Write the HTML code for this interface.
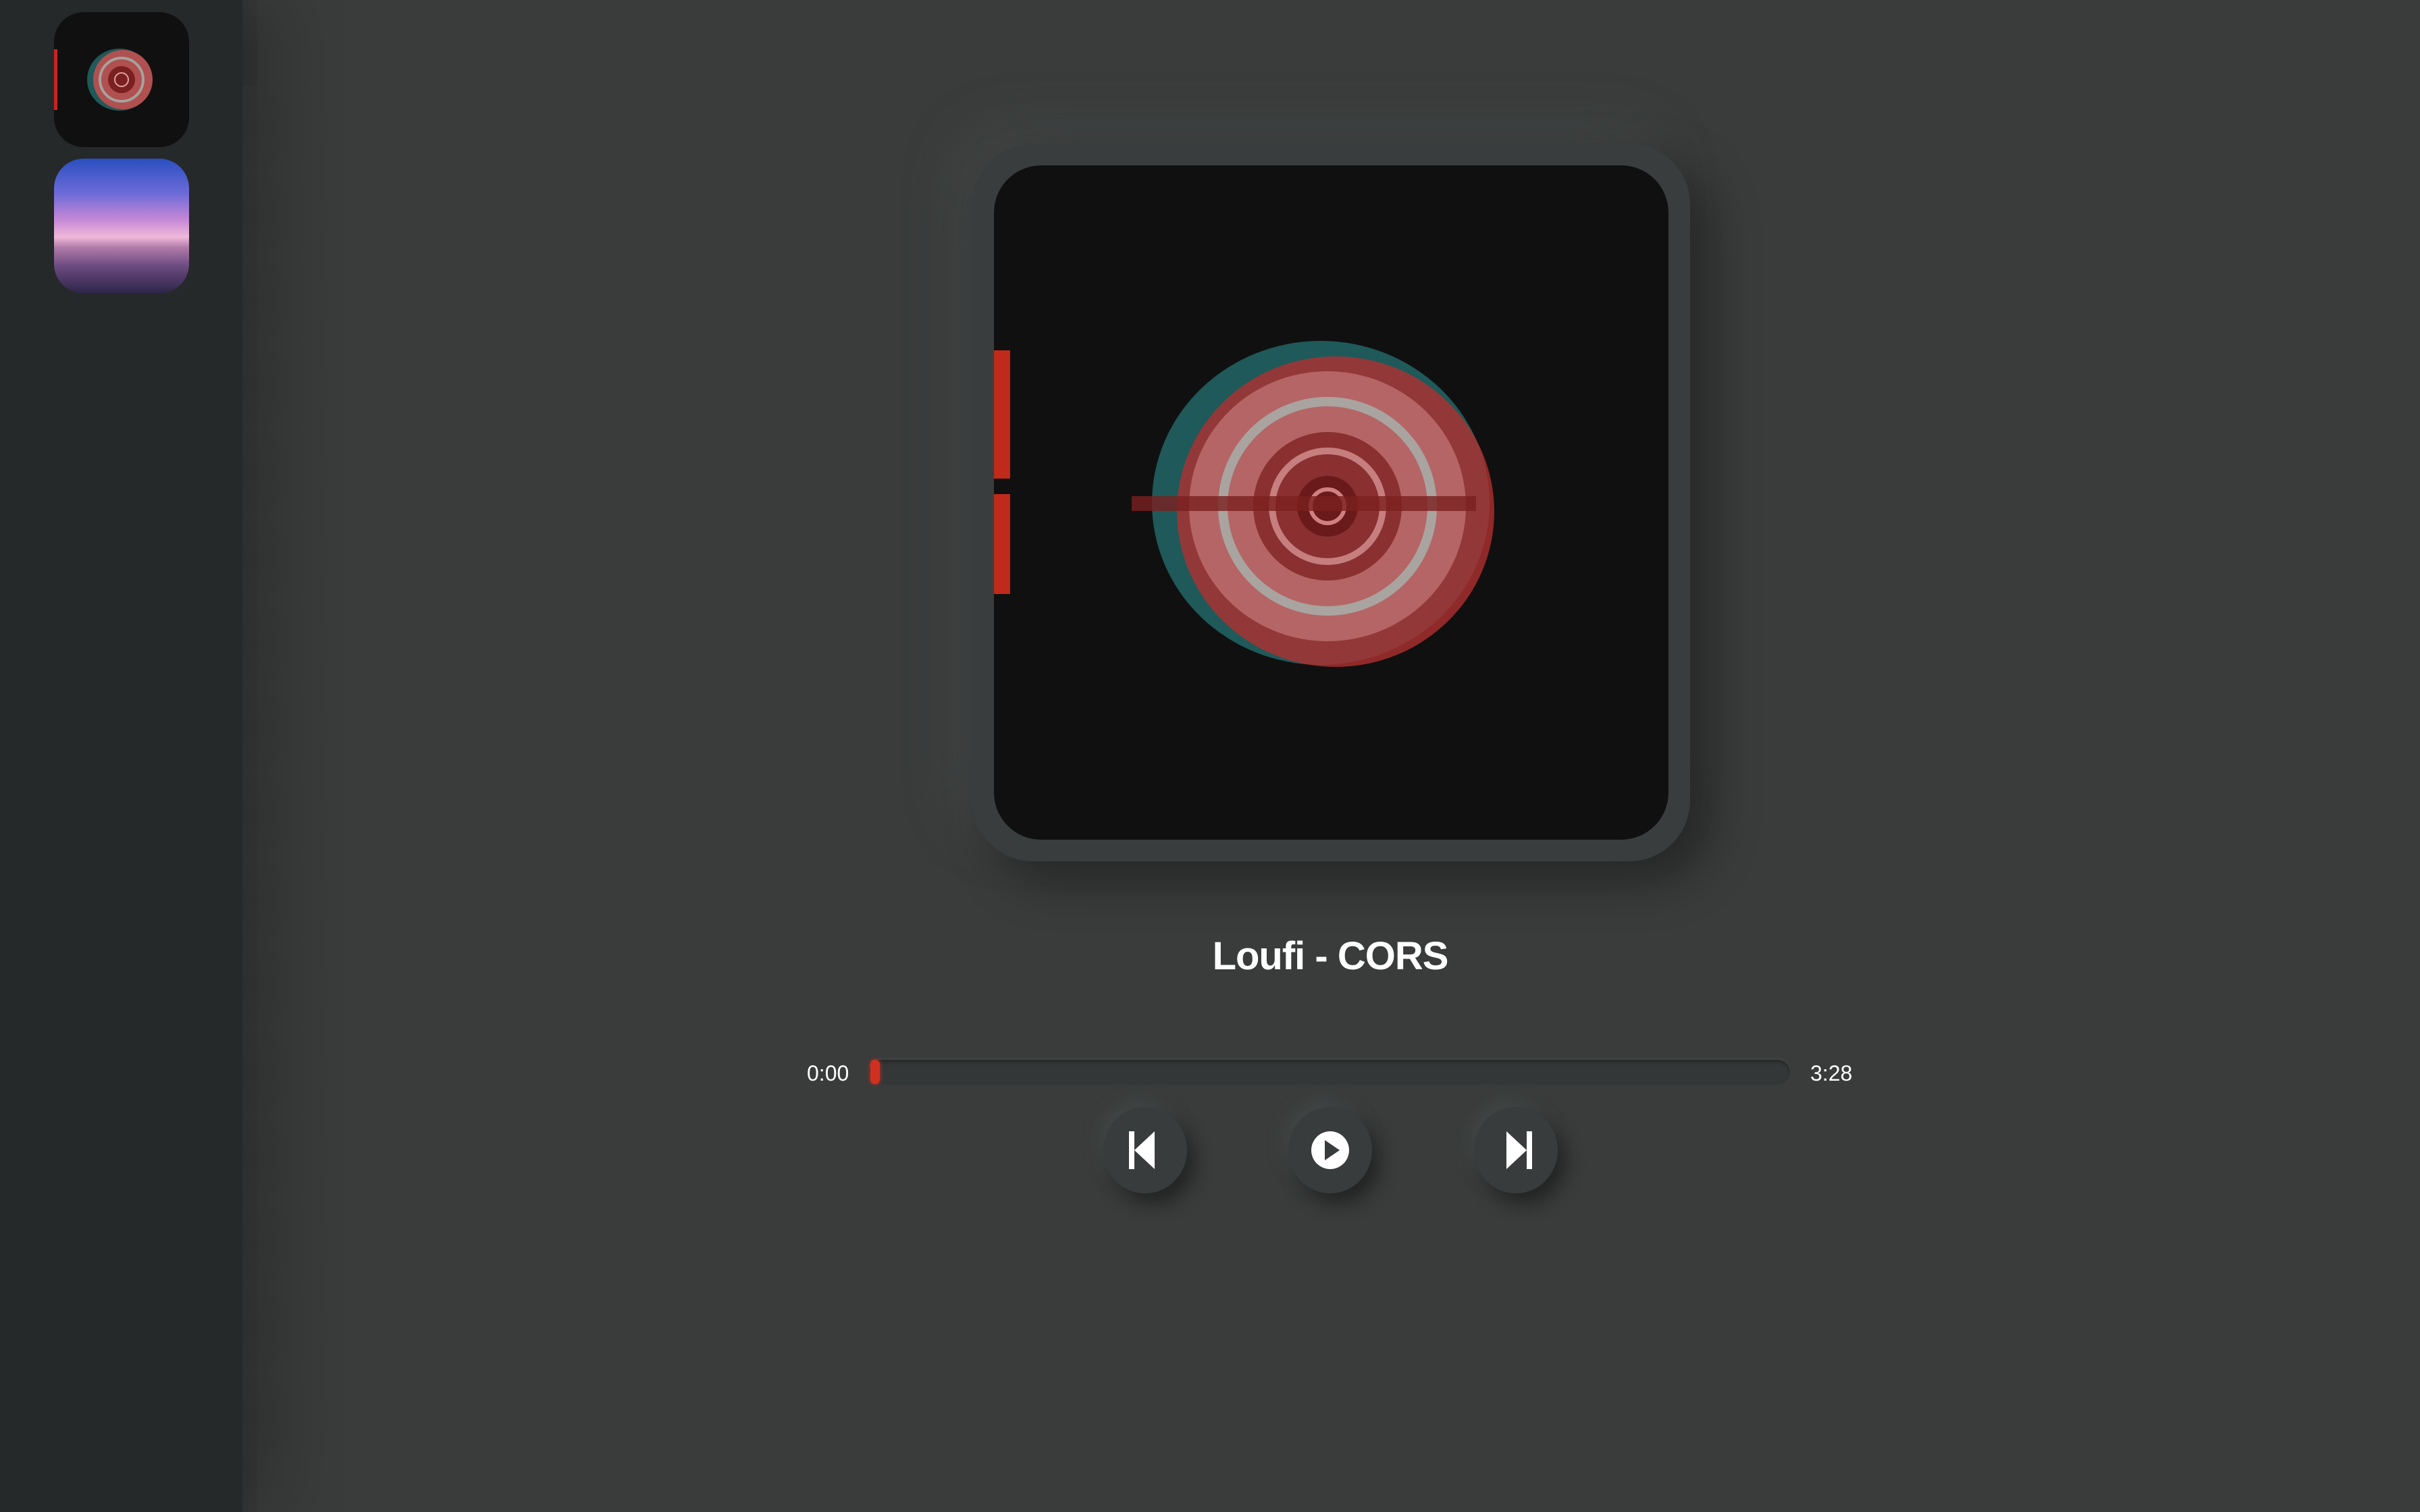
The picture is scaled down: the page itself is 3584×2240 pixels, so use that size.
<!DOCTYPE html>
<html><head><meta charset="utf-8"><style>
html,body{margin:0;padding:0;width:3584px;height:2240px;overflow:hidden;background:#393c3b;font-family:"Liberation Sans",sans-serif}
.side{position:absolute;left:0;top:0;width:359px;height:2240px;background:#262929;box-shadow:20px 0 160px rgba(0,0,0,.45);z-index:2}
.th{position:absolute;left:80px;width:200px;height:200px;border-radius:44px;overflow:hidden}
.t1{top:18px;background:#101010}
.t2{top:235px;background:linear-gradient(180deg,#2a4fc0 0%,#6a6ad8 25%,#c487d6 45%,#f0b8d8 58%,#b07aa8 66%,#6a4a80 80%,#2c2548 100%)}
.outer{position:absolute;left:1440px;top:213px;width:1063px;height:1063px;border-radius:90px;background:#3a3d3d;box-shadow:30px 30px 70px rgba(0,0,0,.35),-30px -30px 70px rgba(80,84,84,.35)}
.inner{position:absolute;left:32px;top:32px;width:999px;height:999px;border-radius:70px;background:#101010;overflow:hidden}
.title{position:absolute;left:1500px;width:940px;top:1383px;text-align:center;color:#fff;font-size:58px;font-weight:bold;letter-spacing:-1px}
.time{position:absolute;top:1572px;color:#fff;font-size:32px}
.bar{position:absolute;left:1287px;top:1570px;width:1364px;height:36px;border-radius:18px;background:#343737;box-shadow:inset 0 4px 4px rgba(0,0,0,.25),0 -2px 3px rgba(80,84,84,.4)}
.knob{position:absolute;left:1289px;top:1570px;width:14px;height:36px;border-radius:7px;background:#d03020;box-shadow:0 0 6px #d03020}
.btn{position:absolute;top:1640px;width:124px;height:128px;border-radius:50%;background:#393c3c;box-shadow:12px 16px 28px rgba(0,0,0,.4),-8px -10px 24px rgba(80,84,84,.45)}
.btn svg{position:absolute;left:32px;top:34px}
</style></head><body>
<div class="side">
 <div class="th t1"><svg width="200" height="200"><rect x="0" y="55" width="5" height="90" fill="#c22"/><g transform="translate(100,100)"><ellipse cx="-3" cy="0" rx="48" ry="46" fill="#2a8a8a" opacity=".6"/><ellipse cx="2" cy="0" rx="44" ry="44" fill="#b05050"/><circle r="32" fill="none" stroke="#9fd8d0" stroke-width="4" opacity=".6"/><circle r="20" fill="#7a2020"/><circle r="10" fill="none" stroke="#e0a0a0" stroke-width="2"/></g></svg></div>
 <div class="th t2"></div>
</div>
<div class="outer"><div class="inner">
<svg width="999" height="999"><rect x="0" y="274" width="24" height="190" fill="#c02a1a"/><rect x="0" y="487" width="24" height="148" fill="#c02a1a"/>
<g transform="translate(494,505)">
<ellipse cx="-10" cy="-5" rx="250" ry="240" fill="#2a8a8a" opacity=".6"/>
<ellipse cx="12" cy="8" rx="235" ry="230" fill="#b03030" opacity=".8"/>
<ellipse cx="0" cy="0" rx="205" ry="200" fill="#b56565"/>
<circle r="155" fill="none" stroke="#9fd8d0" stroke-width="14" opacity=".55"/>
<circle r="110" fill="#8a3030"/>
<circle r="82" fill="none" stroke="#e0a0a0" stroke-width="10" opacity=".7"/>
<circle r="45" fill="#6a1a1a"/>
<circle r="25" fill="none" stroke="#d08080" stroke-width="6"/>
<rect x="-290" y="-15" width="510" height="22" fill="#7a1f1f" opacity=".8"/>
</g></svg>
</div></div>
<div class="title">Loufi - CORS</div>
<div class="time" style="left:1195px">0:00</div>
<div class="bar"></div><div class="knob"></div>
<div class="time" style="left:2681px">3:28</div>
<div class="btn" style="left:1634px"><svg width="60" height="60" viewBox="0 0 60 60"><rect x="6" y="2" width="8" height="56" fill="#fff"/><path d="M14 30 L44 2 V58 Z" fill="#fff"/></svg></div>
<div class="btn" style="left:1908px"><svg width="60" height="60" viewBox="0 0 60 60"><circle cx="30" cy="30" r="28" fill="#fff"/><path d="M22 15 L44 30 L22 45 Z" fill="#393c3c"/></svg></div>
<div class="btn" style="left:2183px"><svg width="60" height="60" viewBox="0 0 60 60"><rect x="46" y="2" width="8" height="56" fill="#fff"/><path d="M46 30 L16 2 V58 Z" fill="#fff"/></svg></div>
</body></html>
